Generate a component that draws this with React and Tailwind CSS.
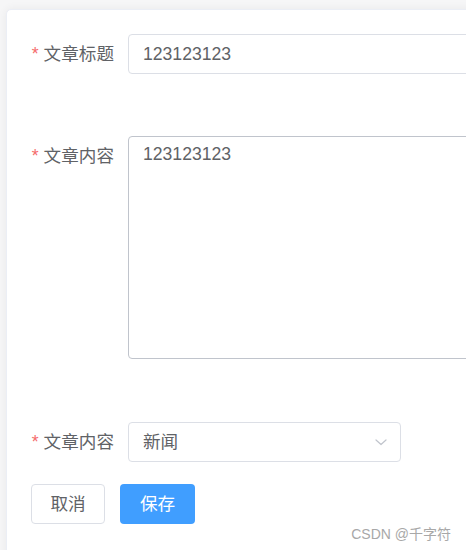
import React, { useState } from "react";

const font = {
  fontFamily: '"Liberation Sans", "Noto Sans CJK SC", sans-serif',
};

function Label({ text }) {
  return (
    <div className="w-[97px] shrink-0 pr-[14px] text-right text-[17.6px] leading-[40px] text-[#606266]">
      <span className="mr-[5px] text-[#f56c6c]">*</span>
      {text}
    </div>
  );
}

export default function App() {
  const [title, setTitle] = useState("123123123");
  const [content, setContent] = useState("123123123");

  return (
    <div
      className="relative h-[550px] w-[466px] overflow-hidden bg-[#f6f6f7] pl-[6px] pt-[9px]"
      style={font}
    >
      <div className="h-[600px] w-[520px] rounded-[5px] border border-[#ebeef5] bg-white pl-[24px] pt-[24px] shadow-[0_0_10px_rgba(0,0,0,0.06)]">
        <div className="flex items-start">
          <Label text="文章标题" />
          <input
            value={title}
            onChange={(e) => setTitle(e.target.value)}
            className="h-[40px] w-[400px] rounded-[4px] border border-[#dcdfe6] px-[14px] text-[17.6px] text-[#606266] outline-none"
          />
        </div>

        <div className="mt-[62px] flex items-start">
          <Label text="文章内容" />
          <textarea
            value={content}
            onChange={(e) => setContent(e.target.value)}
            className="h-[223px] w-[400px] resize-none rounded-[4px] border border-[#c0c4cc] px-[14px] py-[4px] text-[17.6px] leading-[26px] text-[#606266] outline-none"
          />
        </div>

        <div className="mt-[63px] flex items-start">
          <Label text="文章内容" />
          <div className="flex h-[40px] w-[273px] items-center justify-between rounded-[4px] border border-[#dcdfe6] pl-[14px] pr-[12px] text-[17.6px] text-[#606266]">
            <span>新闻</span>
            <svg width="14" height="14" viewBox="0 0 14 14" fill="none">
              <path
                d="M2 5l5 4.5L12 5"
                stroke="#c0c4cc"
                strokeWidth="1.2"
                strokeLinecap="round"
                strokeLinejoin="round"
              />
            </svg>
          </div>
        </div>

        <div className="mt-[22px] flex gap-[15px]">
          <button className="h-[40px] w-[74px] rounded-[4px] border border-[#dcdfe6] bg-white text-[17.6px] text-[#606266]">
            取消
          </button>
          <button className="h-[40px] w-[75px] rounded-[4px] bg-[#409eff] text-[17.6px] text-white">
            保存
          </button>
        </div>
      </div>

      <div className="absolute right-[15px] top-[524px] text-[14px] leading-[20px] text-[#a8a8a8]">
        CSDN @千字符
      </div>
    </div>
  );
}
